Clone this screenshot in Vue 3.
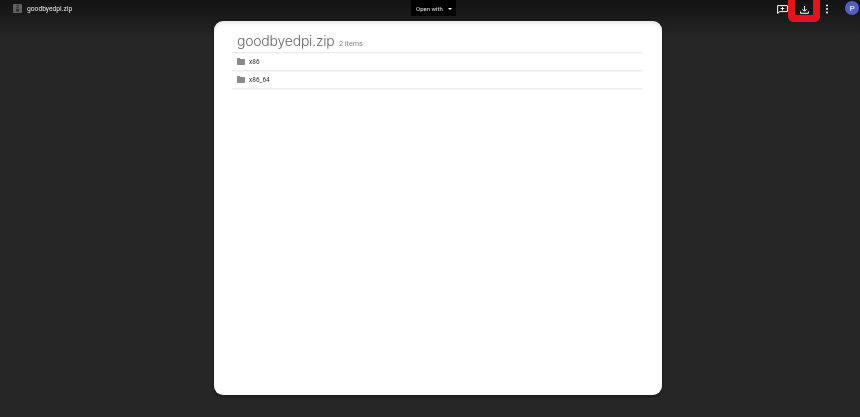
<script setup>
const items = [{ name: 'x86' }, { name: 'x86_64' }]
</script>

<template>
  <div class="page">
    <header class="bar">
      <div class="left">
        <svg class="zip" width="9" height="9" viewBox="0 0 10 10">
          <rect width="10" height="10" rx="1" fill="#5f6064" />
          <rect x="4" y="1" width="2" height="1.2" fill="#2a2a2c" />
          <rect x="4" y="3" width="2" height="1.2" fill="#2a2a2c" />
          <rect x="3.5" y="5.4" width="3" height="3" rx=".6" fill="#2a2a2c" />
        </svg>
        <span class="fname">goodbyedpi.zip</span>
      </div>
      <div class="open"><span class="otext">Open with</span><i class="caret"></i></div>
      <div class="right">
        <svg class="ic comment" width="11" height="9" viewBox="0 0 11 9" fill="none" stroke="#fff">
          <path d="M.6.6h9.8v6H2.8L.6 8.4z" stroke-width="1" />
          <path d="M5.5 1.8v3.6M3.7 3.6h3.6" stroke-width="1" />
        </svg>
        <span class="dl">
          <span class="mark"></span>
          <svg class="ic arrow" width="9" height="8" viewBox="0 0 9 8" fill="none" stroke="#fff" stroke-width="1">
            <path d="M4.5 0v4.8M2.4 3.2 4.5 5.3l2.1-2.1" />
            <path d="M.6 5.4v1.9h7.8V5.4" />
          </svg>
        </span>
        <svg class="ic dots" width="4" height="10" viewBox="0 0 4 10" fill="#fff">
          <circle cx="2" cy="1.4" r="1" />
          <circle cx="2" cy="5" r="1" />
          <circle cx="2" cy="8.6" r="1" />
        </svg>
        <span class="avatar">P</span>
      </div>
    </header>

    <main class="card">
      <div class="head">
        <span class="title">goodbyedpi.zip</span>
        <span class="count">2 items</span>
      </div>
      <ul class="list">
        <li v-for="it in items" :key="it.name" class="row">
          <svg width="8" height="7" viewBox="0 0 8 7" fill="#8a8a8a">
            <path d="M0 .8C0 .3.3 0 .7 0h2l.8.9h3.8c.4 0 .7.3.7.7v4.7c0 .4-.3.7-.7.7H.7C.3 7 0 6.7 0 6.3z" />
          </svg>
          <span class="name">{{ it.name }}</span>
        </li>
      </ul>
    </main>
  </div>
</template>

<style>
html, body { margin: 0; background: #262626; }
</style>

<style scoped>
.page {
  width: 860px;
  height: 417px;
  overflow: hidden;
  position: relative;
  font-family: "Roboto", "Liberation Sans", sans-serif;
  background: linear-gradient(#121212 0, #262626 38px);
}
.bar {
  height: 17px;
  padding-left: 13px;
  padding-right: 1px;
  display: flex;
  align-items: flex-start;
  justify-content: space-between;
  color: #e8e8e8;
  position: relative;
}
.left {
  display: flex;
  align-items: flex-start;
  gap: 5px;
  padding-top: 3px;
  width: 200px;
}
.zip { display: block; margin-top: 1px; }
.fname { font-size: 6.7px; line-height: 10px; margin-top: 1px; will-change: transform; }
.open {
  position: absolute;
  left: 411px;
  top: 0;
  width: 45px;
  height: 16px;
  padding-left: 5px;
  box-sizing: border-box;
  background: #000;
  color: #e6e6e6;
  font-size: 6px;
  display: flex;
  align-items: center;
  gap: 5px;
}
.otext { will-change: transform; }
.caret {
  width: 0;
  height: 0;
  margin-top: 1px;
  border-left: 2.5px solid transparent;
  border-right: 2.5px solid transparent;
  border-top: 2.5px solid #fff;
}
.right {
  display: flex;
  align-items: flex-start;
  padding-top: 1px;
}
.ic { display: block; }
.comment { margin-top: 4px; }
.dl {
  position: relative;
  margin-left: 12.5px;
  width: 9px;
  height: 8px;
  margin-top: 5px;
  display: block;
}
.arrow { position: relative; }
.mark {
  position: absolute;
  left: -12px;
  top: -6px;
  width: 18px;
  height: 15px;
  border: 7px solid #e4131c;
  border-top: 0;
  border-radius: 0 0 6px 6px;
}
.dots { margin-left: 16px; margin-top: 3px; }
.avatar {
  margin-left: 16px;
  width: 14px;
  height: 14px;
  border-radius: 50%;
  background: #5160bd;
  color: #fff;
  font-size: 8px;
  display: flex;
  align-items: center;
  justify-content: center;
}
.card {
  width: 448.5px;
  height: 374px;
  margin: 4px 0 0 213.5px;
  box-sizing: border-box;
  background: #fff;
  border-radius: 9px;
  padding: 10px 19px 0 18.5px;
  box-shadow: 0 1px 3px rgba(0, 0, 0, .4), inset 0 4px 4px -2px rgba(0, 0, 0, .1);
}
.head {
  height: 21px;
  padding-left: 4.5px;
  display: flex;
  align-items: baseline;
  gap: 4.5px;
  border-bottom: 1px solid #ececec;
  box-shadow: 0 1px 0 #f6f6f6;
}
.title {
  font-family: "Inter", "Open Sans", sans-serif;
  font-size: 14px;
  font-weight: 300;
  letter-spacing: -.22px;
  line-height: 19px;
  color: #666;
  will-change: transform;
}
.count { font-size: 7.2px; color: #808080; will-change: transform; }
.list { list-style: none; margin: 0; padding: 0; }
.row {
  height: 17px;
  padding-left: 5px;
  display: flex;
  align-items: center;
  gap: 4px;
  border-bottom: 1px solid #ececec;
  box-shadow: 0 1px 0 #f6f6f6;
}
.name { font-size: 6.5px; color: #2f2f2f; will-change: transform; }
</style>
